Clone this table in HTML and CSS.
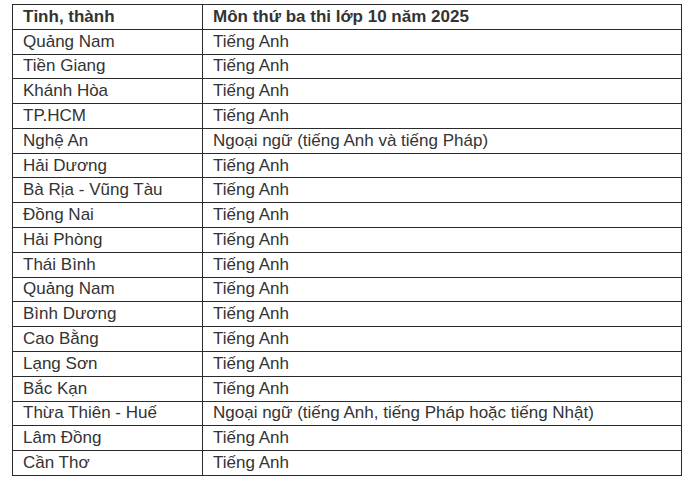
FILE: index.html
```html
<!DOCTYPE html>
<html lang="vi">
<head>
<meta charset="utf-8">
<link rel="stylesheet" href="styles.css">
</head>
<body>
<table class="tbl">
<thead>
<tr><th class="c1">Tỉnh, thành</th><th>Môn thứ ba thi lớp 10 năm 2025</th></tr>
</thead>
<tbody>
<tr><td>Quảng Nam</td><td>Tiếng Anh</td></tr>
<tr><td>Tiền Giang</td><td>Tiếng Anh</td></tr>
<tr><td>Khánh Hòa</td><td>Tiếng Anh</td></tr>
<tr><td>TP.HCM</td><td>Tiếng Anh</td></tr>
<tr><td>Nghệ An</td><td>Ngoại ngữ (tiếng Anh và tiếng Pháp)</td></tr>
<tr><td>Hải Dương</td><td>Tiếng Anh</td></tr>
<tr><td>Bà Rịa - Vũng Tàu</td><td>Tiếng Anh</td></tr>
<tr><td>Đồng Nai</td><td>Tiếng Anh</td></tr>
<tr><td>Hải Phòng</td><td>Tiếng Anh</td></tr>
<tr><td>Thái Bình</td><td>Tiếng Anh</td></tr>
<tr><td>Quảng Nam</td><td>Tiếng Anh</td></tr>
<tr><td>Bình Dương</td><td>Tiếng Anh</td></tr>
<tr><td>Cao Bằng</td><td>Tiếng Anh</td></tr>
<tr><td>Lạng Sơn</td><td>Tiếng Anh</td></tr>
<tr><td>Bắc Kạn</td><td>Tiếng Anh</td></tr>
<tr><td>Thừa Thiên - Huế</td><td>Ngoại ngữ (tiếng Anh, tiếng Pháp hoặc tiếng Nhật)</td></tr>
<tr><td>Lâm Đồng</td><td>Tiếng Anh</td></tr>
<tr><td>Cần Thơ</td><td>Tiếng Anh</td></tr>
</tbody>
</table>
</body>
</html>
```
FILE: styles.css
```css
html, body {
  margin: 0;
  padding: 0;
  background: #fff;
}
body {
  padding: 4px 0 0 12px;
  font-family: "Liberation Sans", Arial, sans-serif;
  font-size: 17px;
  color: #333;
}
.tbl {
  border-collapse: collapse;
  width: 670px;
  table-layout: fixed;
}
.tbl th, .tbl td {
  border: 1px solid #2b2b2b;
  padding: 0 10px;
  height: 24.79px;
  box-sizing: border-box;
  text-align: left;
  vertical-align: middle;
  line-height: 18px;
  white-space: nowrap;
}
.tbl th {
  font-weight: bold;
}
.tbl .c1 {
  width: 190px;
}
```
